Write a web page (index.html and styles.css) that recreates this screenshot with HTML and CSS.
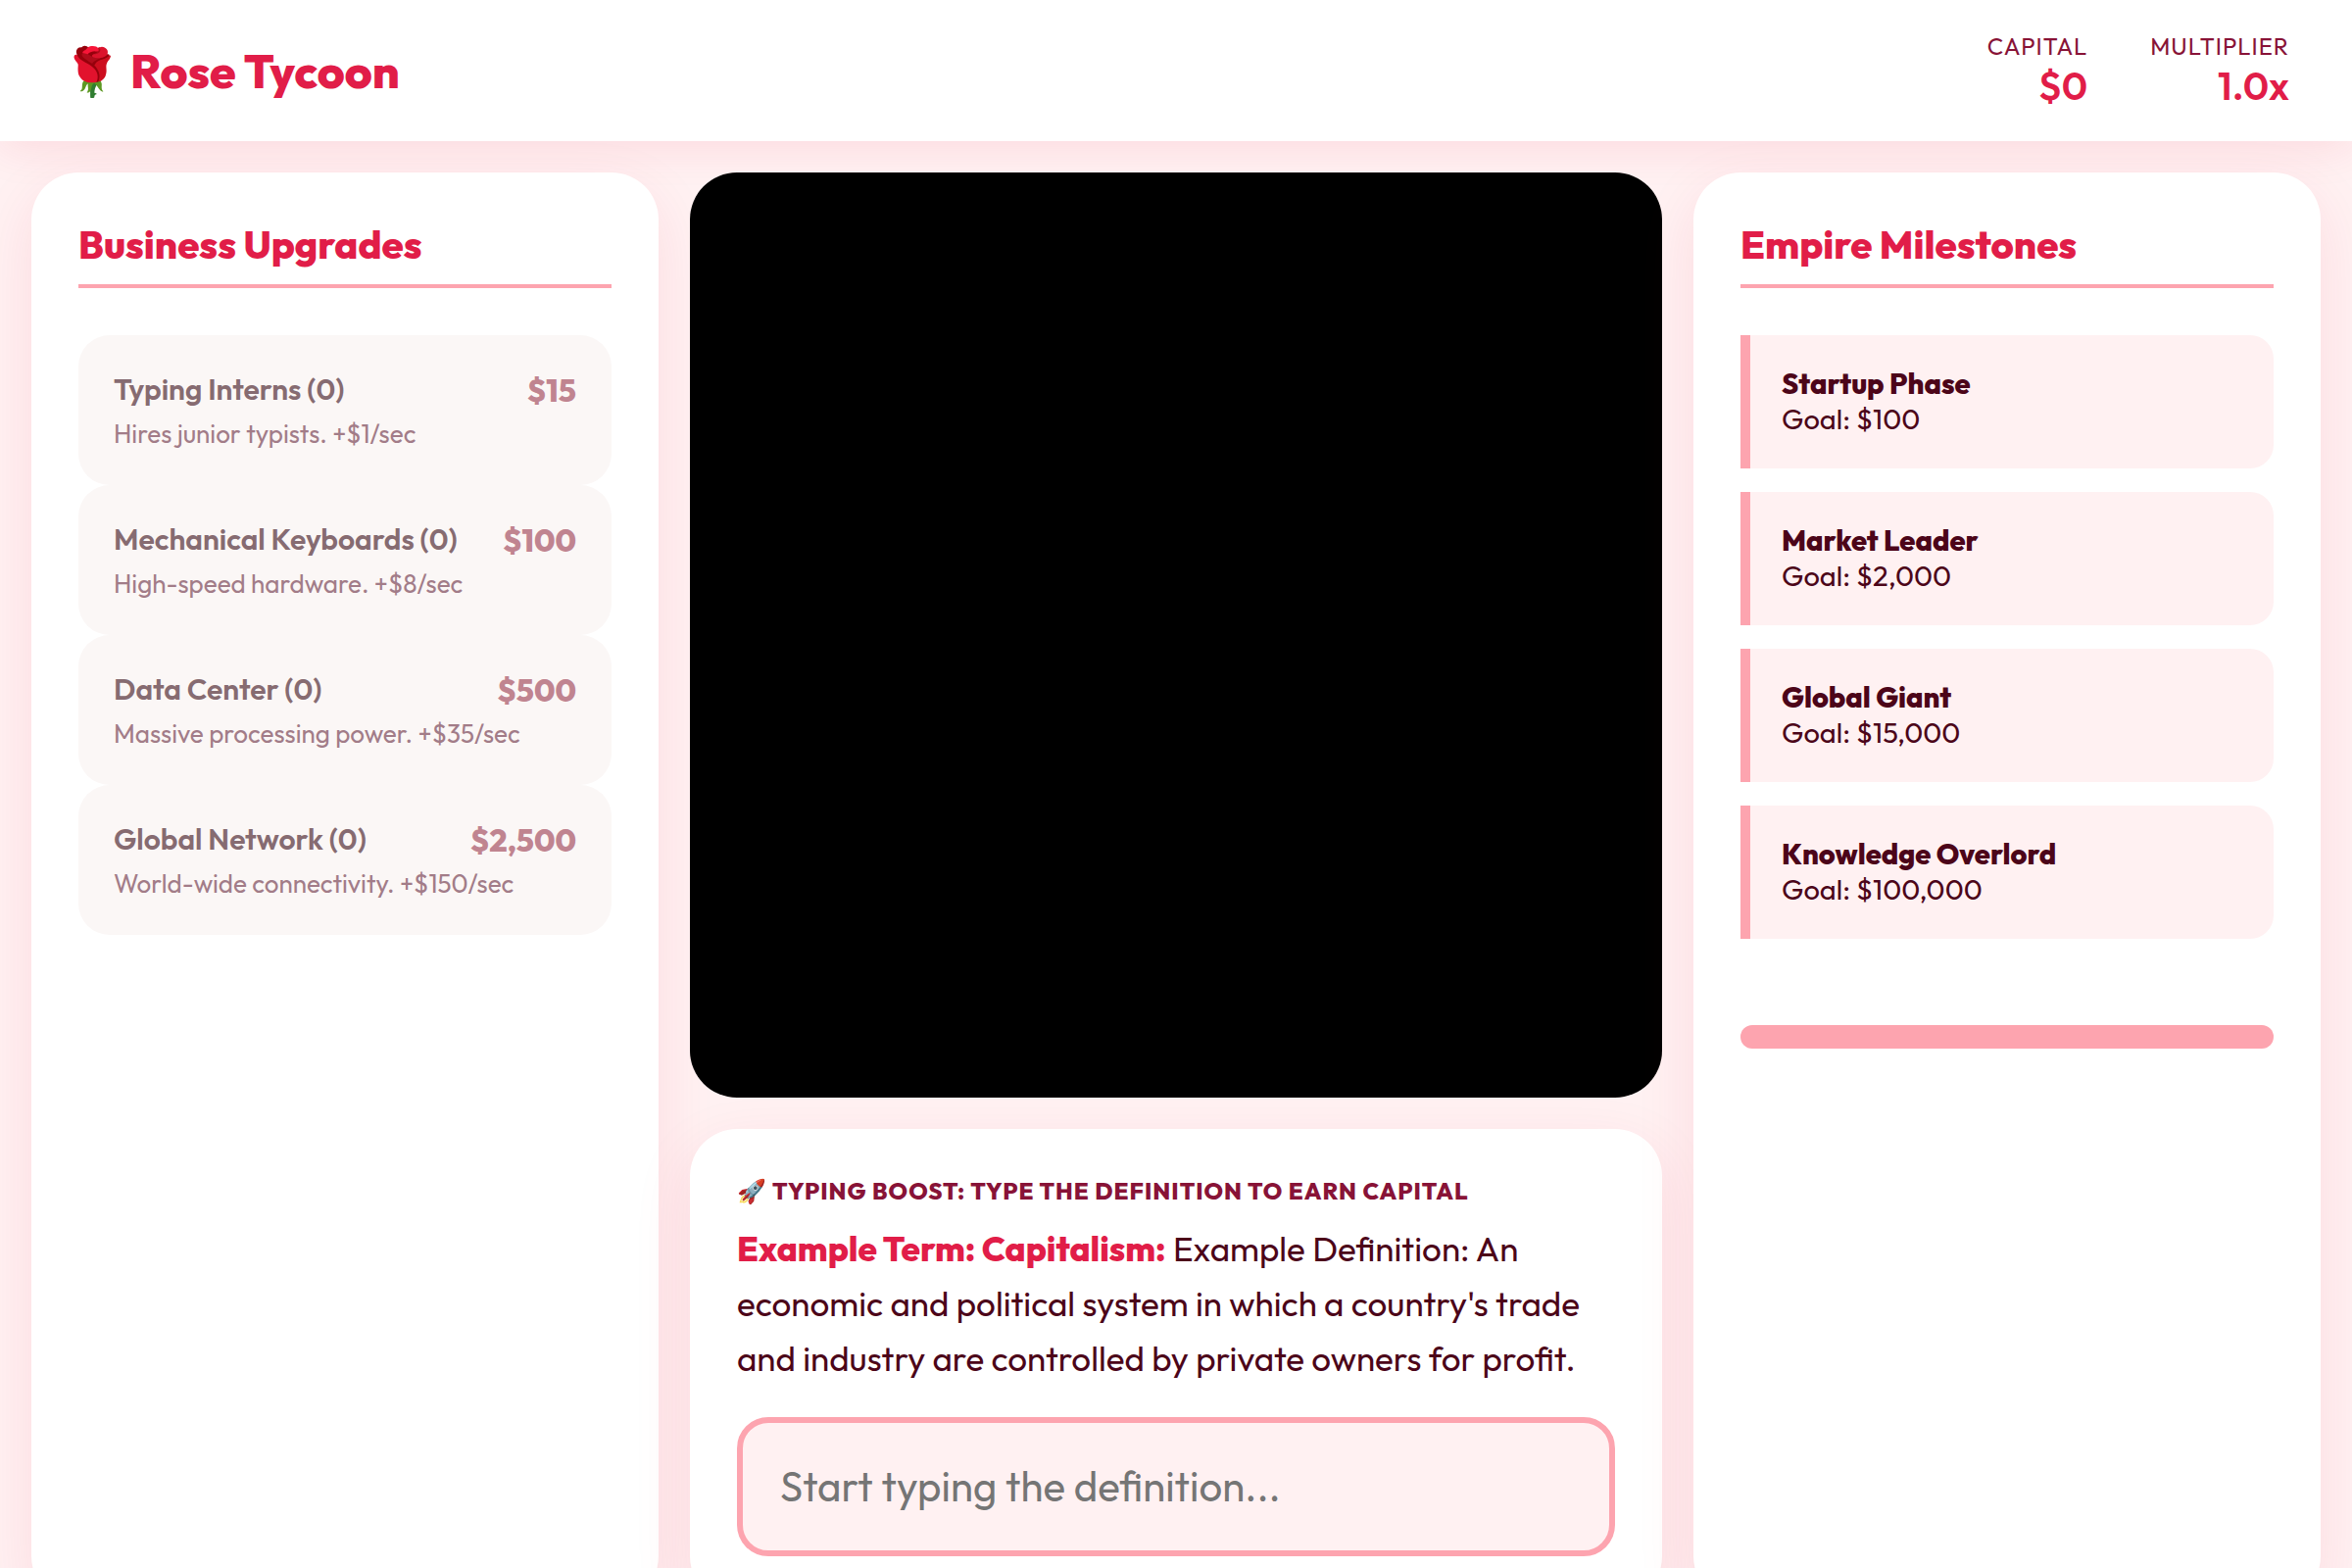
FILE: index.html
```html
<!DOCTYPE html>
<html lang="en">
<head>
    <meta charset="UTF-8">
    <meta name="viewport" content="width=device-width, initial-scale=1.0">
    <title>Rose Tycoon</title>
    <link rel="stylesheet" href="styles.css">
</head>
<body>

<header class="topbar">
    <h1 class="logo">🌹 Rose Tycoon</h1>
    <div class="stats">
        <div class="stat">
            <span class="stat-label">Capital</span>
            <span class="stat-value" id="capital">$0</span>
        </div>
        <div class="stat">
            <span class="stat-label">Multiplier</span>
            <span class="stat-value" id="multiplier">1.0x</span>
        </div>
    </div>
</header>

<main class="game">
    <section class="panel">
        <h2>Business Upgrades</h2>
        <div class="upgrades">
            <button class="upgrade" disabled>
                <span class="upgrade-row">
                    <span class="upgrade-name">Typing Interns (0)</span>
                    <span class="upgrade-cost">$15</span>
                </span>
                <span class="upgrade-desc">Hires junior typists. +$1/sec</span>
            </button>
            <button class="upgrade" disabled>
                <span class="upgrade-row">
                    <span class="upgrade-name">Mechanical Keyboards (0)</span>
                    <span class="upgrade-cost">$100</span>
                </span>
                <span class="upgrade-desc">High-speed hardware. +$8/sec</span>
            </button>
            <button class="upgrade" disabled>
                <span class="upgrade-row">
                    <span class="upgrade-name">Data Center (0)</span>
                    <span class="upgrade-cost">$500</span>
                </span>
                <span class="upgrade-desc">Massive processing power. +$35/sec</span>
            </button>
            <button class="upgrade" disabled>
                <span class="upgrade-row">
                    <span class="upgrade-name">Global Network (0)</span>
                    <span class="upgrade-cost">$2,500</span>
                </span>
                <span class="upgrade-desc">World-wide connectivity. +$150/sec</span>
            </button>
        </div>
    </section>

    <div class="center">
        <canvas class="scene" id="scene"></canvas>

        <section class="panel">
            <label class="boost-label" for="typing">🚀 Typing Boost: Type the definition to earn capital</label>
            <p class="definition"><strong>Example Term: Capitalism:</strong> Example Definition: An economic and political system in which a country's trade and industry are controlled by private owners for profit.</p>
            <input class="typing-input" type="text" id="typing" placeholder="Start typing the definition..." autocomplete="off">
        </section>
    </div>

    <section class="panel">
        <h2>Empire Milestones</h2>
        <ul class="milestones">
            <li class="milestone"><strong>Startup Phase</strong><span>Goal: $100</span></li>
            <li class="milestone"><strong>Market Leader</strong><span>Goal: $2,000</span></li>
            <li class="milestone"><strong>Global Giant</strong><span>Goal: $15,000</span></li>
            <li class="milestone"><strong>Knowledge Overlord</strong><span>Goal: $100,000</span></li>
        </ul>
        <div class="progress"></div>
    </section>
</main>

</body>
</html>
```
FILE: styles.css
```css
* {
    box-sizing: border-box;
}
body {
    font-family: 'Outfit', 'Lato', sans-serif;
    background: #fff1f2;
    color: #4c0519;
    height: 100vh;
    margin: 0;
    overflow: hidden;
}
.topbar {
    display: flex;
    justify-content: space-between;
    align-items: center;
    padding: 32px 64px;
    background: #fff;
    box-shadow: 0 8px 40px rgba(225, 29, 72, 0.1);
}
.logo {
    margin: 0;
    font-size: 48px;
    line-height: 60px;
    font-weight: 800;
    color: #e11d48;
}
.stats {
    display: flex;
    gap: 64px;
    text-align: right;
}
.stat-label, .stat-value {
    display: block;
}
.stat-label {
    font-size: 24px;
    line-height: 30px;
    letter-spacing: 1px;
    text-transform: uppercase;
    color: #881337;
}
.stat-value {
    font-size: 40px;
    line-height: 50px;
    font-weight: 600;
    color: #e11d48;
}
.game {
    display: grid;
    grid-template-columns: 640px 1fr 640px;
    gap: 32px;
    padding: 32px;
}
.center {
    display: flex;
    flex-direction: column;
    gap: 32px;
    min-width: 0;
}
.scene {
    display: block;
    width: 100%;
    height: 59vh;
    background: #000;
    border-radius: 48px;
}
.panel {
    background: #fff;
    padding: 48px;
    border-radius: 48px;
    box-shadow: 0 20px 60px rgba(225, 29, 72, 0.1);
}
h2 {
    margin: 0 0 48px;
    padding-bottom: 16px;
    border-bottom: 4px solid #fda4af;
    font-size: 40px;
    line-height: 50px;
    font-weight: 800;
    color: #e11d48;
}
.upgrade {
    display: block;
    width: 100%;
    padding: 32px;
    border: 4px solid transparent;
    border-radius: 32px;
    background: #fbf7f6;
    font-family: inherit;
    text-align: left;
    cursor: not-allowed;
}
.upgrade-row {
    display: flex;
    justify-content: space-between;
    align-items: flex-start;
    margin-bottom: 8px;
}
.upgrade-name {
    font-size: 30px;
    line-height: 38px;
    font-weight: 600;
    color: #866b71;
}
.upgrade-cost {
    font-size: 32px;
    line-height: 40px;
    font-weight: 800;
    color: #c08490;
}
.upgrade-desc {
    display: block;
    font-size: 26px;
    line-height: 33px;
    color: #a27c88;
}
.boost-label {
    display: block;
    margin-bottom: 16px;
    font-size: 24px;
    line-height: 30px;
    font-weight: 800;
    letter-spacing: 1px;
    text-transform: uppercase;
    color: #881337;
}
.definition {
    margin: 0 0 32px;
    font-size: 35px;
    line-height: 56px;
}
.definition strong {
    font-weight: 800;
    color: #e11d48;
}
.typing-input {
    display: block;
    width: 100%;
    padding: 38px;
    border: 6px solid #fda4af;
    border-radius: 32px;
    background: #fff1f2;
    font-family: inherit;
    font-size: 42px;
    line-height: 54px;
    color: #4c0519;
    outline: none;
}
.milestones {
    display: grid;
    gap: 24px;
    margin: 0 0 88px;
    padding: 0;
    list-style: none;
}
.milestone {
    padding: 32px;
    border-left: 10px solid #fda4af;
    border-radius: 0 24px 24px 0;
    background: #fff1f2;
    font-size: 29px;
    line-height: 36px;
}
.milestone strong {
    display: block;
    font-weight: 800;
}
.progress {
    height: 24px;
    border-radius: 12px;
    background: #fda4af;
}
```
